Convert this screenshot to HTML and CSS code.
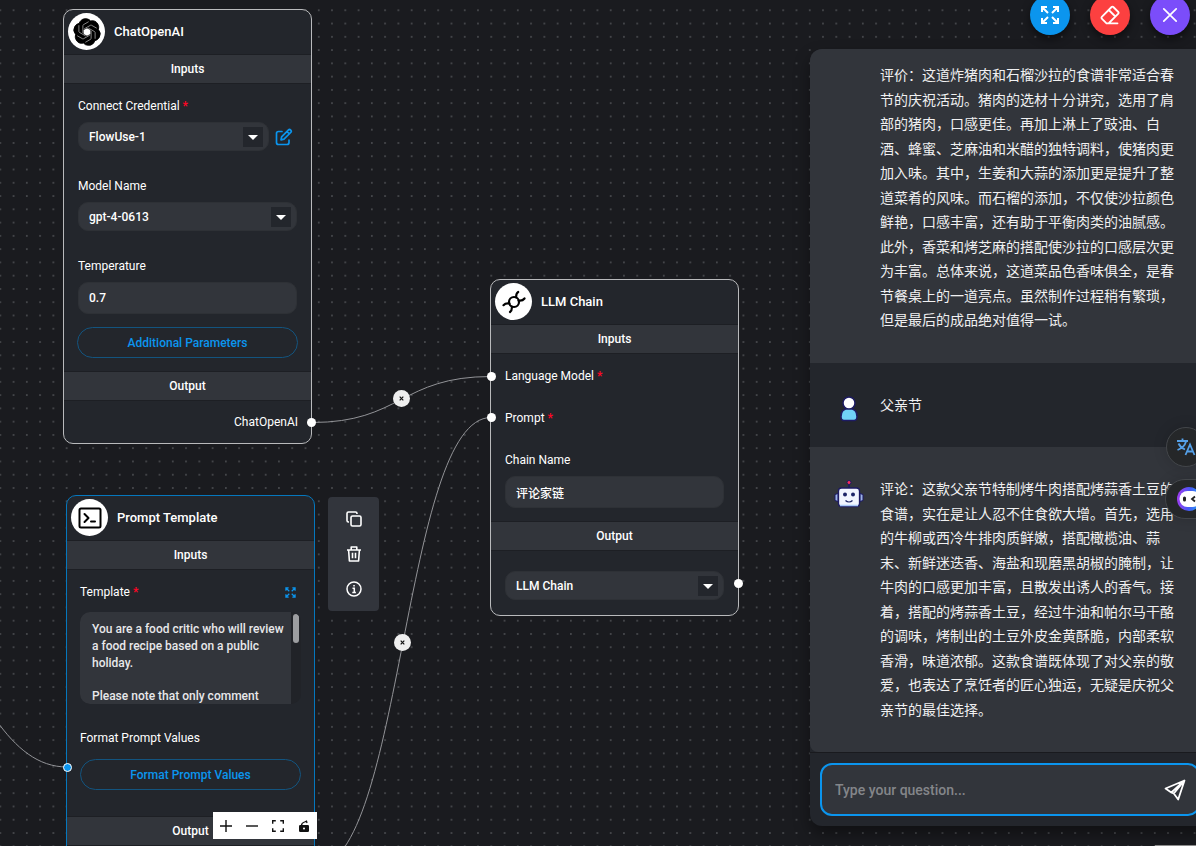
FILE: index.html
```html
<!DOCTYPE html>
<html lang="zh-CN">
<head>
<meta charset="utf-8">
<title>Flow canvas</title>
<link rel="stylesheet" href="styles.css">
</head>
<body>
<main class="canvas">
  <svg class="backdrop" aria-hidden="true">
    <defs>
      <pattern id="dots" x="-6.3" y="-3" width="13.27" height="13.27" patternUnits="userSpaceOnUse">
        <circle cx="6.6" cy="13.27" r="0.7" fill="#808185"/>
        <circle cx="6.6" cy="0" r="0.7" fill="#808185"/>
      </pattern>
    </defs>
    <rect width="100%" height="100%" fill="url(#dots)"/>
    <g fill="none" stroke="#929397" stroke-width="1">
      <path d="M312 422.500C401 422.500 401 376.500 491 376.500"/>
      <path d="M315 867C403 867 403 417.500 491 417.500"/>
      <path d="M-4 720C16 748 38 767 67 767"/>
    </g>
  </svg>

  <button class="edge-button edge-model" aria-label="Remove edge"><svg viewBox="0 0 5 5"><path d="M.7.7l3.600 3.600M4.300.7L.7 4.300"/></svg></button>
  <button class="edge-button edge-prompt" aria-label="Remove edge"><svg viewBox="0 0 5 5"><path d="M.7.7l3.600 3.600M4.300.7L.7 4.300"/></svg></button>

  <section class="node node-openai">
    <header class="node-header">
      <span class="node-logo">
        <svg width="28" height="28" viewBox="-.6 -.6 25.200 25.200">
          <path fill="#000" stroke="#000" stroke-width=".8" d="M22.282 9.821a5.985 5.985 0 0 0-.516-4.911 6.046 6.046 0 0 0-6.510-2.900A6.065 6.065 0 0 0 4.981 4.182a5.985 5.985 0 0 0-3.998 2.900 6.046 6.046 0 0 0 .743 7.097 5.980 5.980 0 0 0 .511 4.911 6.051 6.051 0 0 0 6.515 2.900A5.985 5.985 0 0 0 13.260 24a6.056 6.056 0 0 0 5.772-4.206 5.989 5.989 0 0 0 3.998-2.900 6.056 6.056 0 0 0-.748-7.073z"/>
          <path fill="none" stroke="#aaa" stroke-width=".7" d="M10.500 21.300l4.800-2.800a.8.8 0 0 0 .4-.7v-6.700M3.200 15.400l4.800 2.700a.8.8 0 0 0 .8 0l5.800-3.300M4.700 5.900v5.700a.8.8 0 0 0 .4.7l5.800 3.300M19.300 18.100v-5.700a.8.8 0 0 0-.4-.7l-5.800-3.300M20.800 8.600l-4.800-2.700a.8.8 0 0 0-.8 0L9.400 9.200M13.500 2.700L8.700 5.500a.8.8 0 0 0-.4.7v6.700"/>
          <path fill="#fff" d="M9 10.300l3-1.700 3 1.700v3.400l-3 1.700-3-1.700z"/>
        </svg>
      </span>
      <h2 class="node-title">ChatOpenAI</h2>
    </header>
    <h3 class="node-bar">Inputs</h3>
    <div class="field">
      <label for="credential">Connect Credential <span class="required">*</span></label>
      <div class="field-row">
        <div class="select-box">
          <select id="credential"><option>FlowUse-1</option></select>
          <span class="arrow"></span>
        </div>
        <button class="icon-button" aria-label="Edit credential">
          <svg width="18" height="18" viewBox="0 0 18 18" fill="none" stroke="#0b95ee" stroke-width="1.700" stroke-linecap="round" stroke-linejoin="round"><path d="M7 3.500H3.500A2 2 0 0 0 1.500 5.500v9a2 2 0 0 0 2 2h8.500a2 2 0 0 0 2-2V12M6 11.800l.6-3 6.700-6.700a1.600 1.600 0 0 1 2.400 2.400L9 11.200zM12 3.500l2.400 2.400"/></svg>
        </button>
      </div>
    </div>
    <div class="field">
      <label for="model">Model Name</label>
      <div class="select-box">
        <select id="model"><option>gpt-4-0613</option></select>
        <span class="arrow"></span>
      </div>
    </div>
    <div class="field">
      <label for="temperature">Temperature</label>
      <input class="text-input" id="temperature" type="text" value="0.7">
    </div>
    <div class="action"><button class="outline-button">Additional Parameters</button></div>
    <h3 class="node-bar">Output</h3>
    <div class="output-row">ChatOpenAI</div>
    <span class="handle handle-right openai-out"></span>
  </section>

  <section class="node node-chain">
    <header class="node-header">
      <span class="node-logo">
        <svg width="24" height="24" viewBox="0 0 24 24" fill="none" stroke="#000" stroke-width="2.200" stroke-linecap="round"><circle cx="12" cy="12" r="5"/><path d="M14.200 7.500C14 4.500 14.800 2.800 16.200 2M16.500 10.500c2.500.4 4.500 0 6-2M9.800 16.500c.3 2.800-.3 4.500-1.800 5.500M7.500 13.500c-2.500-.4-4.500 0-6 1.700"/></svg>
      </span>
      <h2 class="node-title">LLM Chain</h2>
    </header>
    <h3 class="node-bar">Inputs</h3>
    <div class="field field-anchor">Language Model <span class="required">*</span></div>
    <div class="field field-anchor">Prompt <span class="required">*</span></div>
    <div class="field">
      <label for="chain-name">Chain Name</label>
      <input class="text-input" id="chain-name" type="text" value="评论家链">
    </div>
    <h3 class="node-bar">Output</h3>
    <div class="output-select">
      <div class="select-box">
        <select aria-label="Output"><option>LLM Chain</option></select>
        <span class="arrow"></span>
      </div>
    </div>
    <span class="handle handle-left chain-model"></span>
    <span class="handle handle-left chain-prompt"></span>
    <span class="handle handle-right chain-out"></span>
  </section>

  <section class="node node-prompt">
    <header class="node-header">
      <span class="node-logo">
        <svg width="24" height="24" viewBox="0 0 24 24" fill="none" stroke="#000" stroke-width="2" stroke-linecap="round" stroke-linejoin="round"><rect x="1.500" y="2.500" width="21" height="19" rx="1.500"/><path d="M6.500 8l4 4-4 4M13 15.500h4"/></svg>
      </span>
      <h2 class="node-title">Prompt Template</h2>
    </header>
    <h3 class="node-bar">Inputs</h3>
    <div class="field field-template">
      <div class="label-row">
        <label for="template">Template <span class="required">*</span></label>
        <button class="icon-button" aria-label="Expand template">
          <svg width="11" height="11" viewBox="0 0 18 18" fill="none" stroke="#0b95ee" stroke-width="2"><path d="M1.500 6V1.500H6M12 1.500h4.500V6M16.500 12v4.500H12M6 16.500H1.500V12M2 2l5 5M16 2l-5 5M16 16l-5-5M2 16l5-5"/></svg>
        </button>
      </div>
      <div class="template-box">
        <textarea class="template" id="template" spellcheck="false">
You are a food critic who will review a food recipe based on a public holiday.

Please note that only comment</textarea>
        <span class="scroll-track"><span class="scroll-thumb"></span></span>
      </div>
    </div>
    <div class="values-label">Format Prompt Values</div>
    <div class="action action-values"><button class="outline-button">Format Prompt Values</button></div>
    <h3 class="node-bar">Output</h3>
    <div class="output-row"></div>
    <span class="handle handle-left handle-active prompt-in"></span>
  </section>

  <div class="node-tools">
    <button class="icon-button" aria-label="Duplicate"><svg width="16" height="16" viewBox="0 0 16 16" fill="none" stroke="#fff" stroke-width="1.600" stroke-linejoin="round"><rect x="5" y="5" width="10" height="10" rx="1.500"/><path d="M3 11H2.500A1.500 1.500 0 0 1 1 9.500v-7A1.500 1.500 0 0 1 2.500 1h7A1.500 1.500 0 0 1 11 2.500V3"/></svg></button>
    <button class="icon-button" aria-label="Delete"><svg width="16" height="16" viewBox="0 0 16 16" fill="none" stroke="#fff" stroke-width="1.600" stroke-linejoin="round"><path d="M1 4h14M2.600 4l.8 11h9.200l.8-11M5.200 3.800V1h5.600v2.800M6.500 6.800v5.400M9.500 6.800v5.400"/></svg></button>
    <button class="icon-button" aria-label="Info"><svg width="16" height="16" viewBox="0 0 16 16" fill="none" stroke="#fff" stroke-width="1.500"><circle cx="8" cy="8" r="7"/><path d="M6.500 7.200H8.300V11.300M6.300 11.500h3.600M7.300 4.700h1.500"/></svg></button>
  </div>

  <div class="zoom-controls">
    <button aria-label="Zoom in"><svg width="12" height="12" viewBox="0 0 12 12" stroke="#111" stroke-width="1.400"><path d="M6 0v12M0 6h12"/></svg></button>
    <button aria-label="Zoom out"><svg width="12" height="12" viewBox="0 0 12 12" stroke="#111" stroke-width="1.400"><path d="M0 6h12"/></svg></button>
    <button aria-label="Fit view"><svg width="12" height="12" viewBox="0 0 12 12" fill="none" stroke="#111" stroke-width="1.400"><path d="M.7 3.800V.7h3.100M8.200.7h3.100v3.100M11.300 8.200v3.100H8.200M3.800 11.300H.7V8.200"/></svg></button>
    <button aria-label="Toggle lock"><svg width="12" height="12" viewBox="0 0 12 12"><rect x="1" y="5" width="10" height="7" rx="1.300" fill="#111"/><path d="M3.500 5.200C3.700 3 5 2.500 6.500 2L8.500 1.200 9 3" fill="none" stroke="#111" stroke-width="1.300"/><circle cx="6" cy="8.400" r="1" fill="#fff"/></svg></button>
  </div>
</main>

<aside class="chat">
  <div class="messages">
    <article class="message">
      <span class="avatar"></span>
      <p>评价：这道炸猪肉和石榴沙拉的食谱非常适合春节的庆祝活动。猪肉的选材十分讲究，选用了肩部的猪肉，口感更佳。再加上淋上了豉油、白酒、蜂蜜、芝麻油和米醋的独特调料，使猪肉更加入味。其中，生姜和大蒜的添加更是提升了整道菜肴的风味。而石榴的添加，不仅使沙拉颜色鲜艳，口感丰富，还有助于平衡肉类的油腻感。此外，香菜和烤芝麻的搭配使沙拉的口感层次更为丰富。总体来说，这道菜品色香味俱全，是春节餐桌上的一道亮点。虽然制作过程稍有繁琐，但是最后的成品绝对值得一试。</p>
    </article>
    <article class="message message-user">
      <span class="avatar">
        <svg width="30" height="30" viewBox="0 0 30 30"><g stroke="#1d1b63" stroke-width="1.500"><path d="M7 21.500c0-5 3-8 8-8s8 3 8 8c0 3-1 4-3 4H10c-2 0-3-1-3-4z" fill="#70d2f8"/><circle cx="15" cy="8" r="6" fill="#fff"/></g></svg>
      </span>
      <p>父亲节</p>
    </article>
    <article class="message">
      <span class="avatar">
        <svg width="30" height="30" viewBox="0 0 30 30"><path d="M15 4v5" stroke="#1d1b63" stroke-width="1.500"/><circle cx="15" cy="3.500" r="2" fill="#ff2a5c" stroke="#1d1b63"/><path d="M1 15.500l3-1v8l-3-1zM29 15.500l-3-1v8l3-1z" fill="#9db4e8" stroke="#1d1b63"/><rect x="4.500" y="9" width="21" height="18.500" rx="3" fill="#f1f5ff" stroke="#1d1b63" stroke-width="1.300"/><path d="M6 26.500h18" stroke="#a8c8f5" stroke-width="1.500"/><circle cx="11" cy="15.500" r="2" fill="#1d2568"/><circle cx="19" cy="15.500" r="2" fill="#1d2568"/><path d="M11.500 21.500c2 1.800 5 1.800 7 0" fill="none" stroke="#1d2568" stroke-width="1.300"/></svg>
      </span>
      <p>评论：这款父亲节特制烤牛肉搭配烤蒜香土豆的食谱，实在是让人忍不住食欲大增。首先，选用的牛柳或西冷牛排肉质鲜嫩，搭配橄榄油、蒜末、新鲜迷迭香、海盐和现磨黑胡椒的腌制，让牛肉的口感更加丰富，且散发出诱人的香气。接着，搭配的烤蒜香土豆，经过牛油和帕尔马干酪的调味，烤制出的土豆外皮金黄酥脆，内部柔软香滑，味道浓郁。这款食谱既体现了对父亲的敬爱，也表达了烹饪者的匠心独运，无疑是庆祝父亲节的最佳选择。</p>
    </article>
  </div>
  <form class="composer">
    <div class="composer-box">
      <input type="text" placeholder="Type your question..." aria-label="Type your question">
      <button type="button" class="icon-button" aria-label="Send"><svg width="22" height="22" viewBox="0 0 22 22" fill="none" stroke="#fff" stroke-width="1.800" stroke-linejoin="round"><path d="M20.500 1.500L1.500 9.500l5.800 4zM20.500 1.500l-6.300 19-4.400-6L20.500 1.500M7.300 13.500l2.500 1"/></svg></button>
    </div>
  </form>
</aside>

<div class="chat-actions">
  <button class="fab fab-expand" aria-label="Expand chat"><svg width="18" height="18" viewBox="0 0 18 18" fill="none" stroke="#fff" stroke-width="2"><path d="M1 6V1h5M12 1h5v5M17 12v5h-5M6 17H1v-5M1.500 1.500l5.500 5.500M16.500 1.500L11 7M16.500 16.500L11 11M1.500 16.500L7 11"/></svg></button>
  <button class="fab fab-clear" aria-label="Clear chat"><svg width="20" height="20" viewBox="0 0 20 20" fill="none" stroke="#fff" stroke-width="1.800" stroke-linejoin="round" stroke-linecap="round"><path d="M17.500 18.300H6.500L1.800 13.600a1.200 1.200 0 0 1 0-1.700L11.600 2a1.200 1.200 0 0 1 1.700 0l5 5a1.200 1.200 0 0 1 0 1.700L9 18M8.800 5l6.500 6.500"/></svg></button>
  <button class="fab fab-close" aria-label="Close chat"><svg width="16" height="16" viewBox="0 0 16 16" fill="none" stroke="#fff" stroke-width="1.700" stroke-linecap="round"><path d="M1.800 1.800l12.400 12.400M14.200 1.800L1.800 14.200"/></svg></button>
</div>

<div class="side-widgets">
  <button class="widget widget-translate" aria-label="Translate"><svg width="20" height="18" viewBox="0 0 20 18" fill="none" stroke="#55a0e8" stroke-width="1.800"><path d="M1 3h11M6.500.5V3M2.500 5.500C4 8.500 6.500 10.500 9 11.500M10 3.500C9 7.500 5.500 10.500 1.500 12M9.500 17L14 6.500 18.500 17M11 13.500h6"/></svg></button>
  <button class="widget widget-assistant" aria-label="Assistant"><svg width="26" height="26" viewBox="0 0 26 26"><defs><linearGradient id="ring" x1="0" y1=".5" x2="1" y2=".6"><stop offset="0" stop-color="#a13cf0"/><stop offset=".5" stop-color="#4758f5"/><stop offset="1" stop-color="#24a8f5"/></linearGradient></defs><circle cx="13" cy="13" r="12" fill="url(#ring)"/><rect x="3.500" y="5" width="21" height="16" rx="8" fill="#fff"/><rect x="7" y="10.500" width="3" height="5" rx="1.500" fill="#222"/><path d="M19 10.500L16 13l3 2.500" fill="none" stroke="#222" stroke-width="1.800"/></svg></button>
</div>
<div class="corner-strip"></div>
</body>
</html>
```

FILE: styles.css
```css
* { box-sizing: border-box; }

body {
  margin: 0;
  height: 100vh;
  position: relative;
  overflow: hidden;
  background: #1a1b1f;
  color: #fff;
  font-family: Roboto, "Noto Sans CJK SC", sans-serif;
  font-size: 12px;
  line-height: 16px;
}

h2, h3, p { margin: 0; }

button, input, select, textarea {
  font: inherit;
  color: inherit;
  border: 0;
  padding: 0;
  background: none;
  outline: none;
}

button { cursor: pointer; }
svg { display: block; }

.canvas { position: absolute; inset: 0; overflow: hidden; }
.backdrop { position: absolute; inset: 0; width: 100%; height: 100%; }

/* Nodes on the free canvas */
.node {
  position: absolute;
  width: 249px;
  background: #23262c;
  border: 1px solid #b9babc;
  border-radius: 10px;
}
.node-openai { left: 63px; top: 9px; }
.node-chain { left: 490px; top: 279px; }
.node-prompt { left: 66px; top: 495px; border-color: #0577bd; }

.node-header {
  display: flex;
  align-items: center;
  gap: 9px;
  height: 44px;
  padding: 0 4px 1px;
}
.node-logo {
  display: flex;
  align-items: center;
  justify-content: center;
  width: 37px;
  height: 37px;
  border-radius: 50%;
  background: #fff;
}
.node-title { font-size: 13px; font-weight: 500; line-height: 18px; }

.node-bar {
  height: 30px;
  border: solid #1d1f24;
  border-width: 1px 0;
  background: #32353b;
  font-size: 12px;
  font-weight: 500;
  line-height: 28px;
  text-align: center;
}

.field {
  display: flex;
  flex-direction: column;
  gap: 8px;
  padding: 14px 14px 13px;
}
.field-anchor { display: block; padding-bottom: 12px; }
.field-template { gap: 12px; padding: 14px 13px 13px; }
.field-row, .label-row { display: flex; align-items: center; }
.field-row { gap: 6px; }
.label-row { justify-content: space-between; padding-right: 5px; }
.required { color: #ff0524; font-weight: 700; }

.select-box { position: relative; flex: 1; }
.select-box select {
  display: block;
  appearance: none;
  width: 100%;
  height: 29px;
  padding: 0 10px;
  border: 1px solid #2e3136;
  border-radius: 10px;
  background: #32353b;
  font-weight: 500;
}
.field-row .select-box { flex: 0 0 191px; }
.arrow {
  position: absolute;
  top: 5px;
  right: 6px;
  display: grid;
  place-items: center;
  width: 20px;
  height: 20px;
  background: #23262c;
  pointer-events: none;
}
.arrow::after {
  content: "";
  border: solid transparent;
  border-width: 5px 5px 0;
  border-top-color: #fff;
}

.text-input {
  width: 100%;
  height: 32px;
  padding: 0 10px;
  border: 1px solid #2e3136;
  border-radius: 10px;
  background: #32353b;
  font-weight: 500;
}

.icon-button { display: flex; align-items: center; justify-content: center; }

.action { padding: 0 13px 13px; }
.outline-button {
  width: 100%;
  height: 31px;
  border: 1px solid #13547f;
  border-radius: 16px;
  color: #0b95ee;
  font-weight: 500;
}

.output-row { min-height: 42px; padding: 13px; text-align: right; }
.output-select { padding: 20px 14px 15px; }

.template-box {
  display: flex;
  height: 92px;
  border-radius: 10px;
  background: #212328;
  overflow: hidden;
}
.template {
  flex: 1;
  min-width: 0;
  padding: 9px 4px 0 12px;
  background: #32353b;
  color: #e8e8ea;
  font-weight: 500;
  line-height: 1.4;
  resize: none;
  overflow: hidden;
}
.scroll-track { width: 10px; padding: 2px; }
.scroll-thumb {
  display: block;
  height: 29px;
  border-radius: 3px;
  background: #9c9da0;
}

.values-label { padding: 13px; }
.action-values { padding-bottom: 26px; }

.handle {
  position: absolute;
  width: 9px;
  height: 9px;
  border-radius: 50%;
  background: #fff;
}
.handle-left { left: -4px; }
.handle-right { right: -5px; }
.handle-active { border: 1px solid #fff; background: #0b95ee; }
.openai-out { top: 408px; }
.chain-model { top: 92px; }
.chain-prompt { top: 133px; }
.chain-out { top: 299px; }
.prompt-in { top: 267px; }

.edge-button {
  position: absolute;
  display: grid;
  place-items: center;
  width: 17px;
  height: 17px;
  border-radius: 50%;
  background: #eee;
}
.edge-button svg {
  width: 5px;
  height: 5px;
  stroke: #111;
  stroke-width: 1.2;
}
.edge-model { left: 393px; top: 390px; }
.edge-prompt { left: 394px; top: 634px; }

.node-tools {
  position: absolute;
  left: 328px;
  top: 497px;
  display: flex;
  flex-direction: column;
  gap: 19px;
  padding: 14px 17px;
  border-radius: 4px;
  background: #32353c;
}
.node-tools .icon-button { width: 17px; height: 16px; }

.zoom-controls {
  position: absolute;
  left: 213px;
  bottom: 7px;
  display: flex;
  background: #fff;
}
.zoom-controls button {
  display: grid;
  place-items: center;
  width: 26px;
  height: 27px;
}

/* Chat panel floating over the canvas */
.chat {
  position: absolute;
  top: 49px;
  right: -14px;
  bottom: 20px;
  display: flex;
  flex-direction: column;
  width: 400px;
  border-radius: 12px;
  background: #23262c;
  box-shadow: 0 8px 16px rgba(0, 0, 0, 0.4);
  overflow: hidden;
}
.messages {
  flex: 1;
  display: flex;
  flex-direction: column;
  justify-content: flex-end;
  min-height: 0;
  overflow: hidden;
  border-radius: 0 0 0 8px;
}
.message {
  flex: none;
  display: flex;
  gap: 16px;
  padding: 30px 34px 30px 24px;
  background: #32353b;
}
.message-user { background: #23262c; }
.message p {
  flex: 1;
  color: #f0f0f1;
  font-size: 14px;
  line-height: 1.75;
}
.avatar { flex: none; width: 30px; height: 24px; padding-top: 2px; }

.composer { padding: 10px; border-top: 1px solid #191a1e; }
.composer-box {
  display: flex;
  align-items: center;
  height: 53px;
  padding: 0 12px 0 13px;
  border: 2px solid #0b95ee;
  border-radius: 12px;
  background: #32353b;
}
.composer-box input { flex: 1; font-size: 14px; font-weight: 500; }
.composer-box input::placeholder { color: #84868a; opacity: 1; }

.chat-actions {
  position: absolute;
  top: -5px;
  right: 6px;
  display: flex;
  gap: 20px;
}
.fab {
  display: grid;
  place-items: center;
  width: 40px;
  height: 40px;
  border-radius: 50%;
  box-shadow: 0 4px 8px rgba(0, 0, 0, 0.5);
}
.fab-expand { background: #0b95ee; }
.fab-clear { background: #fc4040; }
.fab-close { background: #7b4dfa; }

.side-widgets {
  position: absolute;
  top: 427px;
  right: -10px;
  display: flex;
  flex-direction: column;
  align-items: flex-end;
  gap: 12px;
}
.widget {
  display: flex;
  align-items: center;
  height: 40px;
  border: 1px solid #43464a;
  background: #252729;
  box-shadow: 0 0 14px rgba(0, 0, 0, 0.15);
}
.widget-translate { width: 40px; padding-left: 9px; border-radius: 50%; }
.widget-assistant { width: 41px; padding-left: 10px; border-radius: 20px 0 0 20px; }

.corner-strip {
  position: absolute;
  right: 0;
  bottom: 0;
  width: 41px;
  height: 1px;
  background: #8c8c8c;
}
```
